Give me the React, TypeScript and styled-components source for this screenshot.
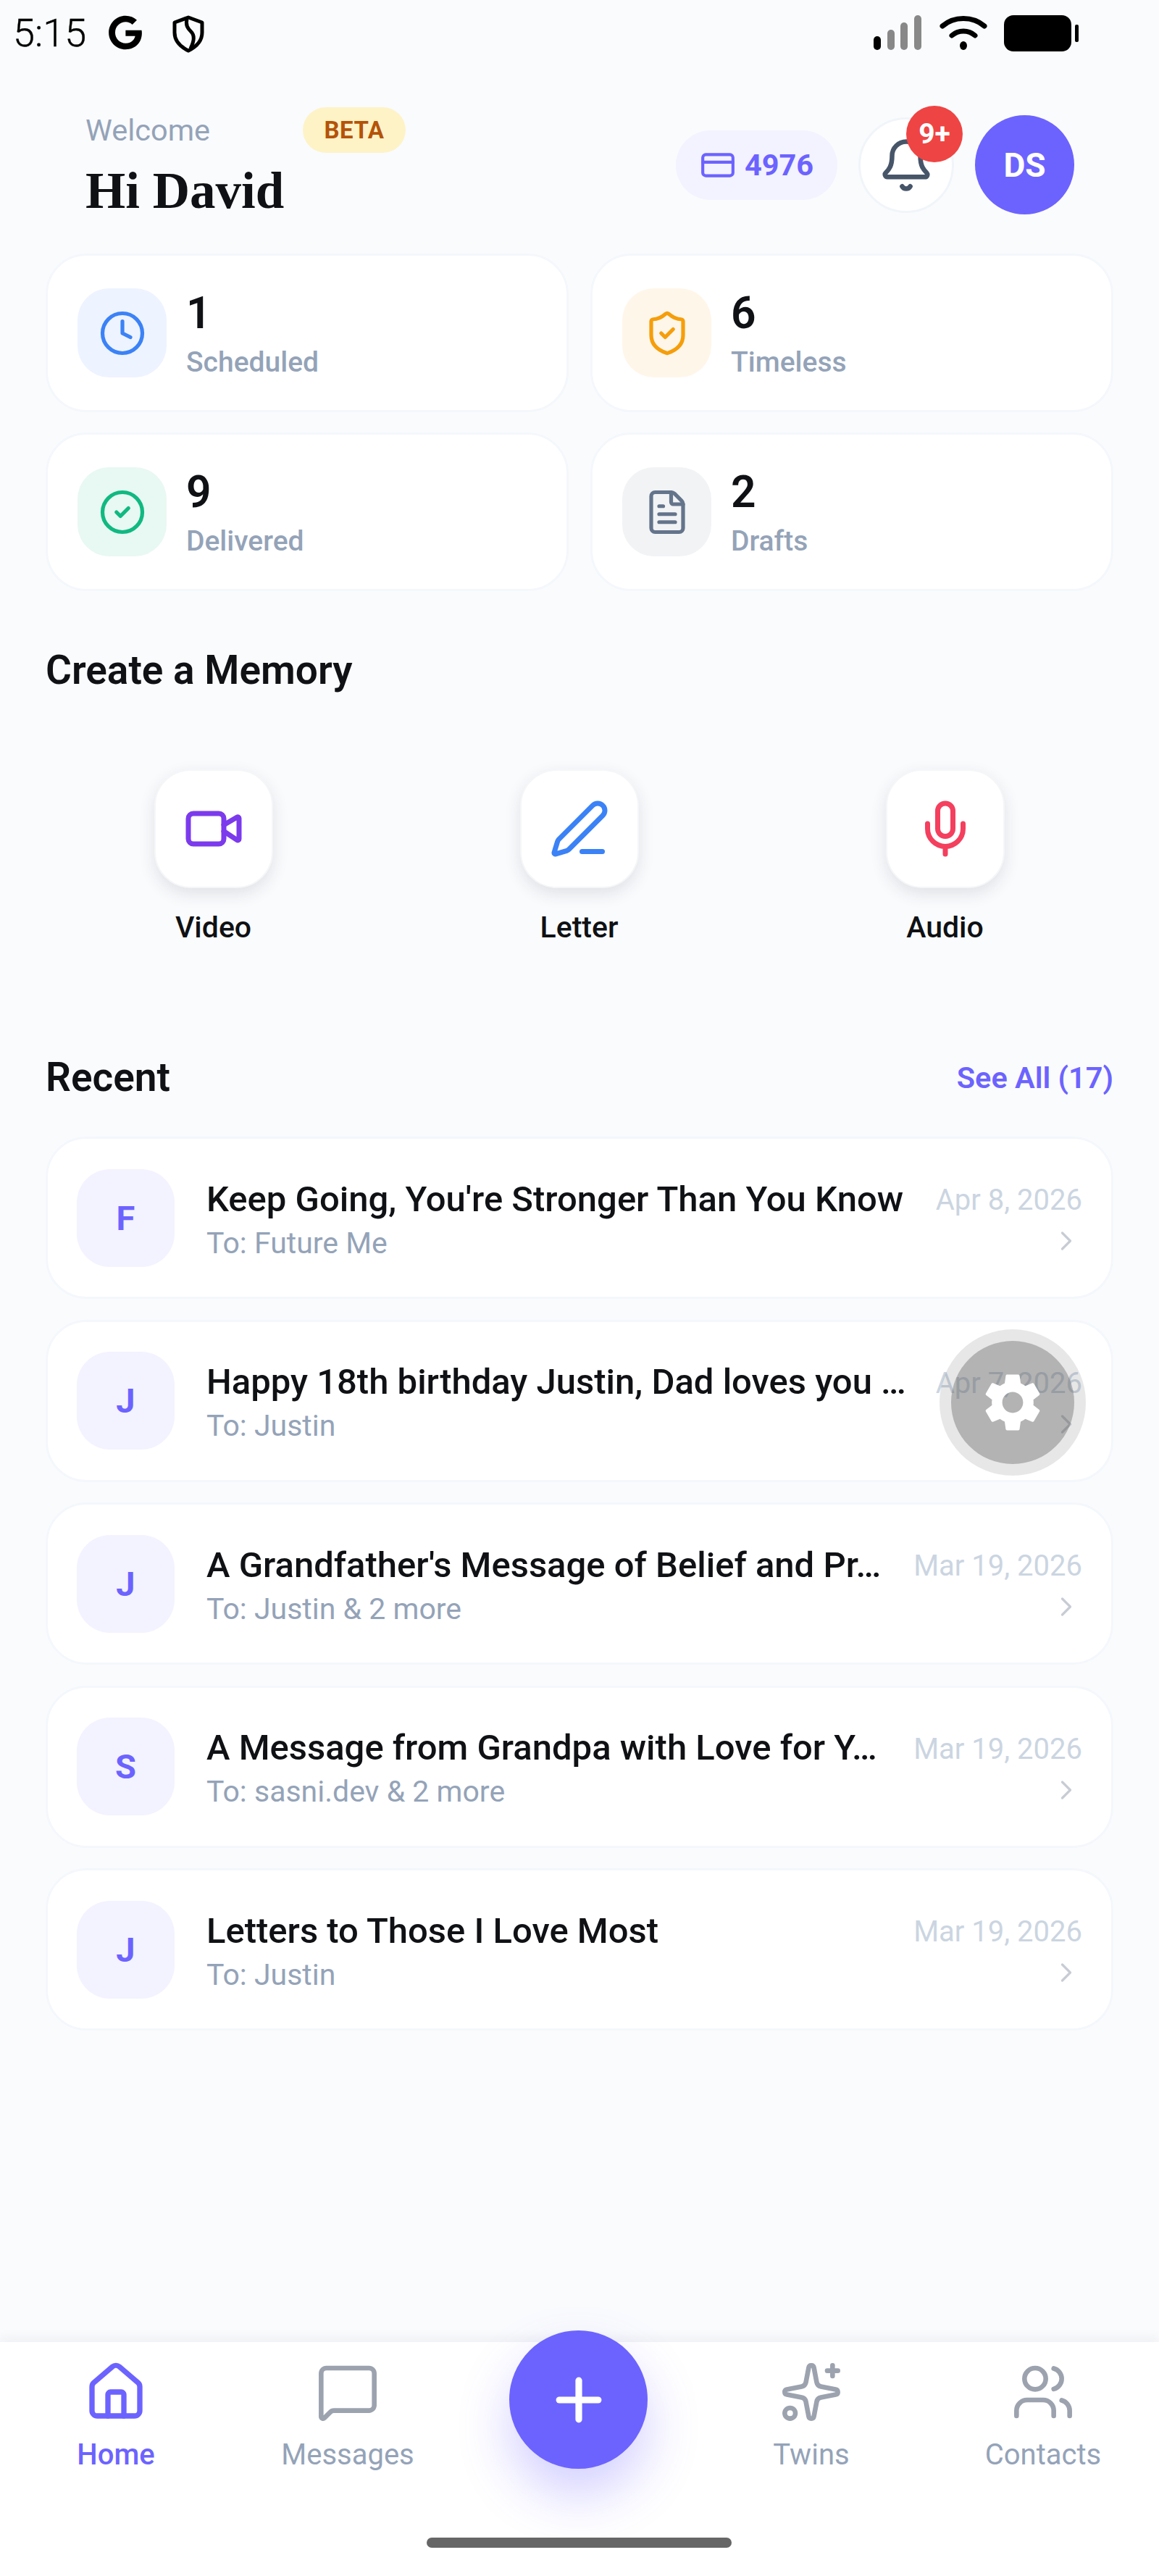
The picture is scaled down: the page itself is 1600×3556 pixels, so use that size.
import React from "react";
import styled, { createGlobalStyle } from "styled-components";
import {
  Bell, CheckCircle2, ChevronRight, Clock, CreditCard, FileText, House, MessageSquare,
  Mic, PenLine, Plus, ShieldCheck, Sparkles, Users, Video,
} from "lucide-react";
import { FaGoogle } from "react-icons/fa";
import { MdSettings } from "react-icons/md";

const PURPLE = "#6c63ff";

const Global = createGlobalStyle`
  html, body { margin: 0; padding: 0; background: #fafbfd; }
  * { box-sizing: border-box; }
  body { font-family: Roboto, "Noto Sans", sans-serif; }
`;

const Screen = styled.div`
  position: relative;
  width: 1600px;
  height: 3556px;
  display: flex;
  flex-direction: column;
  background: #fafbfd;
  overflow: hidden;
`;

const StatusBar = styled.div`
  height: 92px;
  padding: 21px 110px 0 18px;
  display: flex;
  align-items: flex-start;
  color: #000;
`;
const Time = styled.span`
  font-family: Roboto, sans-serif;
  font-weight: 300;
  font-size: 54px;
  line-height: 50px;
  margin-right: 30px;
  -webkit-text-stroke: 0.4px #000;
`;
const ShieldSlot = styled.span`
  margin-left: 40px;
  display: flex;
`;
const StatusGap = styled.div`
  flex: 1;
`;
const StatusIcons = styled.div`
  display: flex;
  align-items: flex-start;
  gap: 23px;
`;

const Header = styled.header`
  display: flex;
  justify-content: space-between;
  align-items: flex-start;
  padding: 56px 117px 0 118px;
  height: 258px;
`;
const Greeting = styled.div`
  display: flex;
  flex-direction: column;
`;
const WelcomeRow = styled.div`
  display: flex;
  align-items: center;
  height: 63px;
`;
const Welcome = styled.span`
  width: 300px;
  font-size: 41.5px;
  font-weight: 400;
  color: #94a3b8;
`;
const Beta = styled.span`
  height: 63px;
  width: 142px;
  border-radius: 32px;
  background: #fef3c7;
  color: #b45309;
  font-size: 33px;
  font-weight: 700;
  letter-spacing: 0.5px;
  display: flex;
  align-items: center;
  justify-content: center;
`;
const Hi = styled.h1`
  margin: 12px 0 0;
  font-family: "Liberation Serif", serif;
  font-size: 71px;
  line-height: 80px;
  font-weight: 700;
  color: #0f1114;
`;
const HeaderActions = styled.div`
  display: flex;
  align-items: center;
  gap: 29px;
  height: 137px;
  margin-top: 11px;
`;
const Credits = styled.div`
  width: 223px;
  height: 96px;
  border-radius: 48px;
  background: #f3f2ff;
  color: ${PURPLE};
  font-size: 41.5px;
  font-weight: 700;
  display: flex;
  align-items: center;
  justify-content: center;
  gap: 12px;
`;
const BellButton = styled.div`
  position: relative;
  width: 132px;
  height: 132px;
  border-radius: 50%;
  background: #fff;
  border: 3px solid #f1f5f9;
  color: #475569;
  display: flex;
  align-items: center;
  justify-content: center;
`;
const BellBadge = styled.span`
  position: absolute;
  top: -19px;
  left: 63px;
  width: 78px;
  height: 78px;
  border-radius: 50%;
  background: #ef4444;
  color: #fff;
  font-size: 39px;
  font-weight: 700;
  display: flex;
  align-items: center;
  justify-content: center;
`;
const Avatar = styled.div`
  width: 137px;
  height: 137px;
  border-radius: 50%;
  background: ${PURPLE};
  color: #fff;
  font-size: 46px;
  font-weight: 700;
  display: flex;
  align-items: center;
  justify-content: center;
`;

const Content = styled.main`
  flex: 1;
  padding: 0 63px;
  display: flex;
  flex-direction: column;
`;
const StatGrid = styled.div`
  display: grid;
  grid-template-columns: 722px 722px;
  grid-auto-rows: 219px;
  column-gap: 30px;
  row-gap: 28px;
`;
const Card = styled.div`
  background: #fff;
  border: 3px solid #f4f7fb;
  border-radius: 56px;
  display: flex;
  align-items: center;
  padding: 0 41px;
`;
const StatIcon = styled.div<{ $bg: string; $fg: string }>`
  width: 123px;
  height: 123px;
  border-radius: 44px;
  background: ${(p) => p.$bg};
  color: ${(p) => p.$fg};
  display: flex;
  align-items: center;
  justify-content: center;
  flex: none;
`;
const StatText = styled.div`
  margin-left: 27px;
  padding-top: 4px;
  display: flex;
  flex-direction: column;
`;
const StatValue = styled.span`
  font-size: 60.5px;
  font-weight: 600;
  line-height: 68px;
  color: #0f1114;
`;
const StatLabel = styled.span`
  font-size: 39px;
  font-weight: 500;
  line-height: 50px;
  color: #94a3b8;
  margin-top: 8px;
`;

const SectionRow = styled.div`
  display: flex;
  justify-content: space-between;
  align-items: center;
`;
const SectionTitle = styled.h2`
  margin: 0;
  font-size: 55px;
  line-height: 60px;
  font-weight: 600;
  color: #0f1114;
`;
const CreateTitle = styled(SectionRow)`
  margin-top: 79px;
  height: 60px;
`;
const MemoryRow = styled.div`
  display: grid;
  grid-template-columns: repeat(3, 505px);
  margin: 107px 0 0 -21px;
`;
const MemoryItem = styled.div`
  display: flex;
  flex-direction: column;
  align-items: center;
`;
const MemoryTile = styled.div<{ $fg: string }>`
  width: 164px;
  height: 164px;
  border-radius: 50px;
  background: #fff;
  color: ${(p) => p.$fg};
  border: 2px solid #f5f6f8;
  box-shadow: 0 8px 22px rgba(40, 40, 60, 0.12);
  display: flex;
  align-items: center;
  justify-content: center;
`;
const MemoryLabel = styled.span`
  margin-top: 31px;
  font-size: 41px;
  line-height: 46px;
  font-weight: 500;
  color: #0f1114;
`;
const RecentRow = styled(SectionRow)`
  margin-top: 154px;
  height: 60px;
`;
const SeeAll = styled.span`
  font-size: 41.5px;
  font-weight: 600;
  color: ${PURPLE};
`;
const List = styled.div`
  margin-top: 52px;
  display: flex;
  flex-direction: column;
  gap: 28.5px;
`;
const Row = styled(Card)`
  position: relative;
  height: 224px;
  padding: 0 40px;
`;
const RowAvatar = styled.div`
  width: 135px;
  height: 135px;
  border-radius: 46px;
  background: #f3f2ff;
  color: ${PURPLE};
  font-size: 47px;
  font-weight: 700;
  display: flex;
  align-items: center;
  justify-content: center;
  flex: none;
`;
const RowBody = styled.div`
  flex: 1;
  min-width: 0;
  margin-left: 44px;
  padding-top: 5px;
  display: flex;
  flex-direction: column;
`;
const RowTitle = styled.div`
  font-size: 49px;
  line-height: 58px;
  font-weight: 500;
  color: #0f1114;
  white-space: nowrap;
`;
const RowTo = styled.div`
  font-size: 41px;
  line-height: 50px;
  margin-top: 6px;
  color: #94a3b8;
`;
const RowMeta = styled.div`
  flex: none;
  margin-left: 16px;
  align-self: stretch;
  padding-top: 62px;
  display: flex;
  flex-direction: column;
  align-items: flex-end;
  color: #cbd5e1;
  font-size: 40px;
  line-height: 46px;
`;
const Chevron = styled.span`
  display: flex;
  margin-top: 11px;
  color: #c8ccd4;
`;
const GearHalo = styled.div`
  position: absolute;
  left: 1297px;
  top: 1835px;
  width: 202px;
  height: 202px;
  border-radius: 50%;
  background: rgba(120, 120, 120, 0.18);
  display: flex;
  align-items: center;
  justify-content: center;
`;
const GearDisc = styled.div`
  width: 170px;
  height: 170px;
  border-radius: 50%;
  background: rgba(90, 90, 90, 0.37);
  color: #fff;
  display: flex;
  align-items: center;
  justify-content: center;
`;

const Nav = styled.nav`
  position: relative;
  height: 323px;
  background: #fff;
  box-shadow: 0 -6px 14px rgba(30, 40, 60, 0.05);
  display: grid;
  grid-template-columns: repeat(5, 320px);
`;
const NavItem = styled.div<{ $active?: boolean }>`
  padding-top: 25px;
  display: flex;
  flex-direction: column;
  align-items: center;
  color: ${(p) => (p.$active ? PURPLE : "#9ca3af")};
`;
const NavLabel = styled.span<{ $active?: boolean }>`
  margin-top: 20px;
  font-size: 40px;
  line-height: 46px;
  font-weight: ${(p) => (p.$active ? 500 : 400)};
  color: ${(p) => (p.$active ? PURPLE : "#94a3b8")};
`;
const Fab = styled.div`
  position: absolute;
  left: 703px;
  top: -16px;
  width: 191px;
  height: 191px;
  border-radius: 50%;
  background: ${PURPLE};
  color: #fff;
  box-shadow: 0 36px 70px rgba(108, 99, 255, 0.3);
  display: flex;
  align-items: center;
  justify-content: center;
`;
const HomeBar = styled.div`
  position: absolute;
  left: 589px;
  top: 270px;
  width: 421px;
  height: 14px;
  border-radius: 7px;
  background: #666;
`;

const stats = [
  { value: "1", label: "Scheduled", bg: "#edf3ff", fg: "#3b82f6", Icon: Clock },
  { value: "6", label: "Timeless", bg: "#fff6ea", fg: "#f59e0b", Icon: ShieldCheck },
  { value: "9", label: "Delivered", bg: "#e8f8f2", fg: "#10b981", Icon: CheckCircle2 },
  { value: "2", label: "Drafts", bg: "#f2f3f5", fg: "#64748b", Icon: FileText },
];
const memories = [
  { label: "Video", fg: "#7c3aed", Icon: Video },
  { label: "Letter", fg: "#3b82f6", Icon: PenLine },
  { label: "Audio", fg: "#f43f5e", Icon: Mic },
];
const recents = [
  { l: "F", title: "Keep Going, You're Stronger Than You Know", to: "To: Future Me", date: "Apr 8, 2026" },
  { l: "J", title: "Happy 18th birthday Justin, Dad loves you …", to: "To: Justin", date: "Apr 7, 2026" },
  { l: "J", title: "A Grandfather's Message of Belief and Pr…", to: "To: Justin & 2 more", date: "Mar 19, 2026" },
  { l: "S", title: "A Message from Grandpa with Love for Y…", to: "To: sasni.dev & 2 more", date: "Mar 19, 2026" },
  { l: "J", title: "Letters to Those I Love Most", to: "To: Justin", date: "Mar 19, 2026" },
];
const navLeft = [
  { label: "Home", Icon: House, active: true },
  { label: "Messages", Icon: MessageSquare, active: false },
];
const navRight = [
  { label: "Twins", Icon: Sparkles, active: false },
  { label: "Contacts", Icon: Users, active: false },
];

const ShieldGlyph = () => (
  <svg width="46" height="52" viewBox="0 0 46 52" fill="none" stroke="#000" strokeWidth="5">
    <path d="M23 3 L42 10 V24 C42 36 33 44 23 49 C13 44 4 36 4 24 V10 Z" strokeLinejoin="round" />
    <path d="M21 5 C19 14 22 18 27 23 C32 28 31 36 26 46" />
  </svg>
);
const SignalGlyph = () => (
  <svg width="68" height="48" viewBox="0 0 68 48">
    <rect x="0" y="29" width="10" height="19" rx="5" fill="#000" />
    <rect x="19" y="20" width="10" height="28" rx="5" fill="#888" />
    <rect x="37" y="10" width="10" height="38" rx="5" fill="#888" />
    <rect x="56" y="0" width="10" height="48" rx="5" fill="#888" />
  </svg>
);
const WifiGlyph = () => (
  <svg width="66" height="50" viewBox="0 0 66 50" fill="none" stroke="#000" strokeWidth="7" strokeLinecap="round">
    <path d="M4 15 C20 1 46 1 62 15" />
    <path d="M17 28 C26 20 40 20 49 28" />
    <ellipse cx="33" cy="42" rx="5" ry="6" fill="#000" stroke="none" />
  </svg>
);
const BatteryGlyph = () => (
  <svg width="104" height="50" viewBox="0 0 104 50">
    <rect x="0" y="0" width="93" height="50" rx="13" fill="#000" />
    <rect x="98" y="13" width="5" height="24" rx="2" fill="#000" />
  </svg>
);

export default function App() {
  return (
    <Screen>
      <Global />
      <StatusBar>
        <Time>5:15</Time>
        <FaGoogle size={48} />
        <ShieldSlot>
          <ShieldGlyph />
        </ShieldSlot>
        <StatusGap />
        <StatusIcons>
          <SignalGlyph />
          <WifiGlyph />
          <BatteryGlyph />
        </StatusIcons>
      </StatusBar>

      <Header>
        <Greeting>
          <WelcomeRow>
            <Welcome>Welcome</Welcome>
            <Beta>BETA</Beta>
          </WelcomeRow>
          <Hi>Hi David</Hi>
        </Greeting>
        <HeaderActions>
          <Credits>
            <CreditCard size={50} strokeWidth={2} />
            4976
          </Credits>
          <BellButton>
            <Bell size={78} strokeWidth={2} />
            <BellBadge>9+</BellBadge>
          </BellButton>
          <Avatar>DS</Avatar>
        </HeaderActions>
      </Header>

      <Content>
        <StatGrid>
          {stats.map(({ value, label, bg, fg, Icon }) => (
            <Card key={label}>
              <StatIcon $bg={bg} $fg={fg}>
                <Icon size={66} strokeWidth={1.9} />
              </StatIcon>
              <StatText>
                <StatValue>{value}</StatValue>
                <StatLabel>{label}</StatLabel>
              </StatText>
            </Card>
          ))}
        </StatGrid>

        <CreateTitle>
          <SectionTitle>Create a Memory</SectionTitle>
        </CreateTitle>
        <MemoryRow>
          {memories.map(({ label, fg, Icon }) => (
            <MemoryItem key={label}>
              <MemoryTile $fg={fg}>
                <Icon size={84} strokeWidth={2} />
              </MemoryTile>
              <MemoryLabel>{label}</MemoryLabel>
            </MemoryItem>
          ))}
        </MemoryRow>

        <RecentRow>
          <SectionTitle>Recent</SectionTitle>
          <SeeAll>See All (17)</SeeAll>
        </RecentRow>
        <List>
          {recents.map((r) => (
            <Row key={r.title}>
              <RowAvatar>{r.l}</RowAvatar>
              <RowBody>
                <RowTitle>{r.title}</RowTitle>
                <RowTo>{r.to}</RowTo>
              </RowBody>
              <RowMeta>
                {r.date}
                <Chevron>
                  <ChevronRight size={44} strokeWidth={1.8} />
                </Chevron>
              </RowMeta>
            </Row>
          ))}
        </List>
      </Content>

      <GearHalo>
        <GearDisc>
          <MdSettings size={96} />
        </GearDisc>
      </GearHalo>

      <Nav>
        {navLeft.map(({ label, Icon, active }) => (
          <NavItem key={label} $active={active}>
            <Icon size={88} strokeWidth={active ? 2 : 1.8} />
            <NavLabel $active={active}>{label}</NavLabel>
          </NavItem>
        ))}
        <div />
        {navRight.map(({ label, Icon, active }) => (
          <NavItem key={label} $active={active}>
            <Icon size={88} strokeWidth={active ? 2 : 1.8} />
            <NavLabel $active={active}>{label}</NavLabel>
          </NavItem>
        ))}
        <Fab>
          <Plus size={92} strokeWidth={2.4} />
        </Fab>
        <HomeBar />
      </Nav>
    </Screen>
  );
}
